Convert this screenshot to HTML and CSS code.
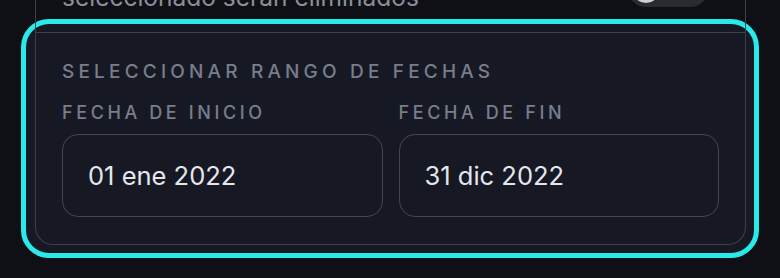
FILE: index.html
```html
<!DOCTYPE html>
<html>
<head>
    <meta charset="UTF-8">
    <meta name="viewport" content="width=device-width, initial-scale=1.0">
    <title>Rango de fechas</title>
    <link rel="stylesheet" href="styles.css">
</head>
<body>
    <div class="settings-card">
        <div class="setting-row">
            <div class="setting-text">seleccionado serán eliminados</div>
            <div class="toggle"><div class="toggle-knob"></div></div>
        </div>
        <div class="range-section">
            <div class="section-title">Seleccionar rango de fechas</div>
            <div class="date-fields">
                <div class="date-field">
                    <div class="field-label">Fecha de inicio</div>
                    <div class="date-input">01 ene 2022</div>
                </div>
                <div class="date-field">
                    <div class="field-label">Fecha de fin</div>
                    <div class="date-input">31 dic 2022</div>
                </div>
            </div>
        </div>
    </div>
</body>
</html>
```

FILE: styles.css
```css
html {
    background: #0e1016;  /* Near black page */
}

body, html {
    margin: 0;
    padding: 0;
    width: 100%;
    height: 100%;
    overflow: hidden;
    font-family: 'Inter', 'Noto Sans', sans-serif;
}

.settings-card {
    margin: 0 34px 0 35px;
    border: 1px solid #3c3f4a;
    border-top: none;
    border-radius: 0 0 18px 18px;
}

.setting-row {
    display: flex;
    justify-content: space-between;
    align-items: flex-start;
    margin-top: -40px;
    padding: 23px 37px 21px 26px;
}

.setting-text {
    font-size: 24.5px;
    line-height: 28px;
    color: #8c8e98;
}

.toggle {
    display: flex;
    align-items: center;
    width: 80px;
    height: 36px;
    margin-top: -12px;
    padding: 0 4px;
    box-sizing: border-box;
    border-radius: 18px;
    background: #2a2b31;
}

.toggle-knob {
    width: 28px;
    height: 28px;
    border-radius: 50%;
    background: #cfd0d4;
}

.range-section {
    position: relative;
    border-top: 1px solid #3c3f4a;
    padding: 28px 26px 27px 26px;
}

/* Focus highlight around the whole section */
.range-section::before {
    content: '';
    position: absolute;
    top: -14px;
    right: -14px;
    bottom: -14px;
    left: -15px;
    z-index: -1;
    border: 5px solid #28eaea;
    border-radius: 28px;
    background: #161924;
}

.section-title,
.field-label {
    font-size: 18px;
    line-height: 22px;
    font-weight: 500;
    letter-spacing: 0.2em;
    text-transform: uppercase;
    color: #797d8c;
}

.section-title {
    font-size: 19px;
    letter-spacing: 0.22em;
    margin-bottom: 19px;
}

.date-fields {
    display: grid;
    grid-template-columns: 1fr 1fr;
    gap: 16px;
}

.field-label {
    margin-bottom: 10px;
}

.date-input {
    display: flex;
    align-items: center;
    height: 83px;
    padding: 0 25px;
    box-sizing: border-box;
    border: 1px solid #43454f;
    border-radius: 16px;
    font-size: 25.5px;
    color: #e4e6ec;
}
```
